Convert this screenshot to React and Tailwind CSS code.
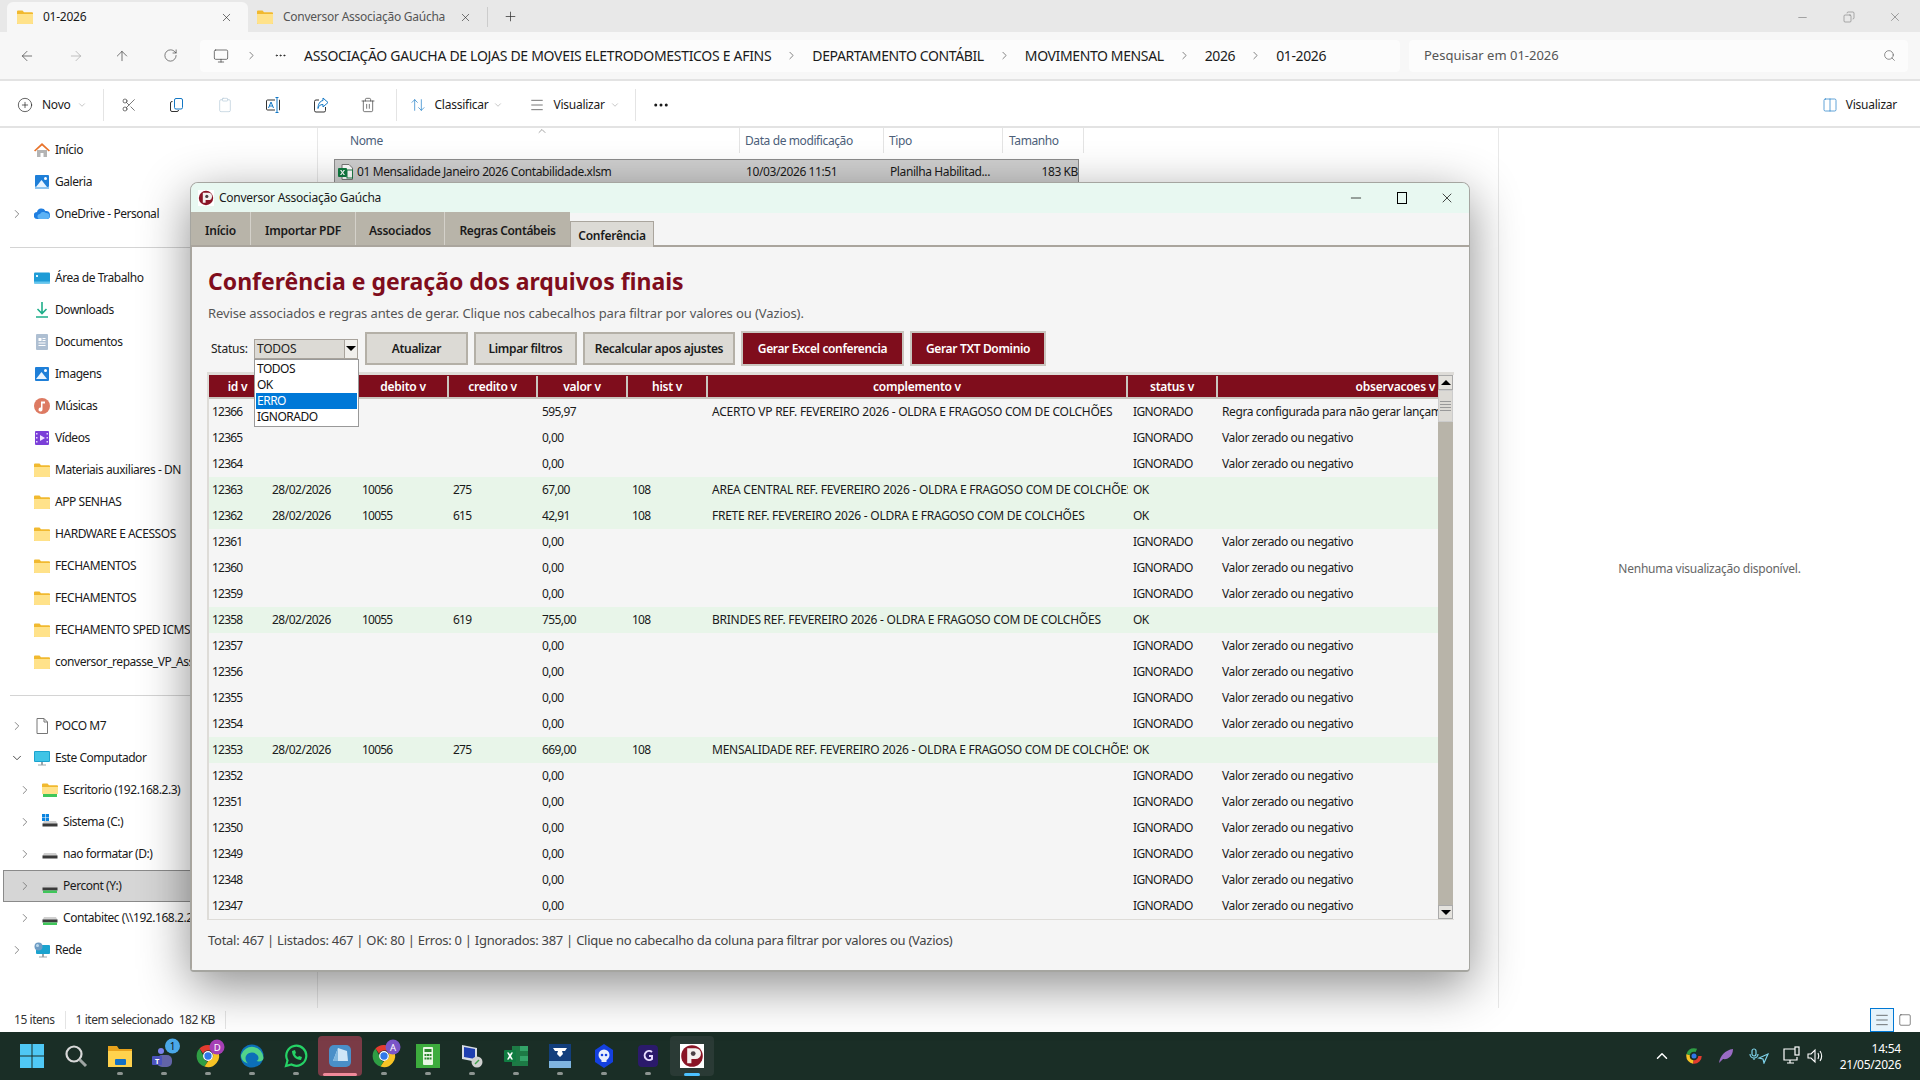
import {
  ArrowLeft, ArrowRight, ArrowUp, RotateCw, Monitor, ChevronRight, ChevronDown, ChevronUp, Scissors, Clipboard,
  Trash2, ArrowUpDown, Menu, Search, X, Minus, Square, Plus, CirclePlus, Columns2, Ellipsis, Copy as Restore,
} from "lucide-react";

const COMP = " REF. FEVEREIRO 2026 - OLDRA E FRAGOSO COM DE COLCHÕES";
const ZERO = "Valor zerado ou negativo";
const ign = (id) => ({ id, val: "0,00", status: "IGNORADO", obs: ZERO });
const ok = (id, deb, cred, val, name) => ({
  id, date: "28/02/2026", deb, cred, val, hist: "108", comp: name + COMP, status: "OK", green: true,
});

const rows = [
  { id: 12366, val: "595,97", comp: "ACERTO VP" + COMP, status: "IGNORADO", obs: "Regra configurada para não gerar lançamento" },
  ign(12365), ign(12364),
  ok(12363, "10056", "275", "67,00", "AREA CENTRAL"),
  ok(12362, "10055", "615", "42,91", "FRETE"),
  ign(12361), ign(12360), ign(12359),
  ok(12358, "10055", "619", "755,00", "BRINDES"),
  ign(12357), ign(12356), ign(12355), ign(12354),
  ok(12353, "10056", "275", "669,00", "MENSALIDADE"),
  ign(12352), ign(12351), ign(12350), ign(12349), ign(12348), ign(12347),
];

const GRID = "grid grid-cols-[59px_91px_90px_89px_90px_80px_420px_90px_220px]";

function Folder({ className = "w-4 h-4" }) {
  return (
    <svg viewBox="0 0 16 16" className={className}>
      <path d="M0 2.5A1 1 0 0 1 1 1.5h4.5L7 3.2h8a1 1 0 0 1 1 1V14a1 1 0 0 1-1 1H1a1 1 0 0 1-1-1z" fill="#f1b92f" />
      <path d="M0 5h16v9a1 1 0 0 1-1 1H1a1 1 0 0 1-1-1z" fill="#ffe28a" />
    </svg>
  );
}

function HomeIcon() {
  return (
    <svg viewBox="0 0 16 16" className="w-4 h-4">
      <path d="M3 8v7h3.5v-4h3v4H13V8z" fill="#b4b4b4" />
      <path d="M0 8.5 8 1l8 7.500-1.200 1L8 3.500 1.200 9.500z" fill="#e8742c" />
    </svg>
  );
}

function PictureIcon({ stack }) {
  return (
    <svg viewBox="0 0 16 16" className="w-4 h-4">
      {stack && <rect x="1" y="13" width="14" height="2" fill="#8cc4f0" />}
      <rect x="1" y="1" width="14" height={stack ? 12 : 14} rx="1" fill="#1e7fd8" />
      <circle cx="11.500" cy="4.500" r="1.500" fill="#fff" />
      <path d="M2 13 7.500 6l5.500 7z" fill="#e8f4ff" />
    </svg>
  );
}

function OneDriveIcon() {
  return (
    <svg viewBox="0 0 16 16" className="w-4 h-4">
      <path d="M3.500 13A3.500 3.500 0 0 1 3 6a4.500 4.500 0 0 1 8.400-1A3.700 3.700 0 0 1 15.900 9 3 3 0 0 1 13 13z" fill="#1f7ee0" />
      <path d="M6 13a2.500 2.500 0 0 1 0-5 4 4 0 0 1 6-1 3 3 0 0 1 1 6z" fill="#5cb2f5" />
    </svg>
  );
}

function DesktopIcon() {
  return (
    <svg viewBox="0 0 16 16" className="w-4 h-4">
      <rect x="0" y="2.500" width="16" height="11" rx="1" fill="#1d9bd6" />
      <rect x="0" y="11.500" width="16" height="2" fill="#63c6ee" />
      <rect x="2" y="5" width="2" height="2" fill="#d8f3ff" />
    </svg>
  );
}

function DownloadIcon() {
  return (
    <svg viewBox="0 0 16 16" className="w-4 h-4" fill="none" stroke="#1fae8a" strokeWidth="1.600">
      <path d="M8 0v11M3.500 7 8 11.500 12.500 7M2 15h12" />
    </svg>
  );
}

function DocIcon() {
  return (
    <svg viewBox="0 0 16 16" className="w-4 h-4">
      <rect x="2" y="0" width="12" height="16" rx="1" fill="#aebfd2" />
      <path d="M4.500 4h3v3h-3zM8.500 4h3v1h-3zM8.500 6h3v1h-3zM4.500 8.500h7v1h-7zM4.500 11h7v1h-7z" fill="#fff" />
    </svg>
  );
}

function MusicIcon() {
  return (
    <svg viewBox="0 0 16 16" className="w-4 h-4">
      <circle cx="8" cy="8" r="8" fill="#dd7a62" />
      <path d="M7 3.500h4v2H8.500v6a2 2 0 1 1-1.500-1.900z" fill="#fff" />
    </svg>
  );
}

function VideoIcon() {
  return (
    <svg viewBox="0 0 16 16" className="w-4 h-4">
      <rect x="1" y="1" width="14" height="14" rx="1" fill="#7b3fd8" />
      <path d="M6 5l5 3-5 3z" fill="#f0e6ff" />
      <path d="M2 3h1.500v1.500H2zM2 7h1.500v1.500H2zM2 11h1.500v1.500H2zM12.500 3H14v1.500h-1.500zM12.500 7H14v1.500h-1.500zM12.500 11H14v1.500h-1.500z" fill="#e5d8ff" />
    </svg>
  );
}

function PageIcon() {
  return (
    <svg viewBox="0 0 16 16" className="w-4 h-4" fill="#fff" stroke="#777">
      <path d="M3 .5h7l3.500 3.500v11.500h-10.500z" />
      <path d="M10 .5V4h3.500" fill="none" />
    </svg>
  );
}

function PcIcon() {
  return (
    <svg viewBox="0 0 16 16" className="w-4 h-4">
      <rect x="0" y="1" width="16" height="11" rx="1" fill="#1ba3cf" />
      <rect x="1" y="2" width="14" height="9" fill="#3fc4e6" />
      <path d="M7 12h2v2.500h3v1H4v-1h3z" fill="#9aa5ab" />
    </svg>
  );
}

function DriveIcon({ green, win, folder }) {
  if (folder) {
    return (
      <svg viewBox="0 0 16 16" className="w-4 h-4">
        <path d="M0 2.500A1 1 0 0 1 1 1.500h4.500L7 3.200h8a1 1 0 0 1 1 1V11H0z" fill="#f1b92f" />
        <path d="M0 5h16v7H0z" fill="#ffe28a" />
        <rect x="1" y="12" width="14" height="3" fill="#3fc65a" />
      </svg>
    );
  }
  return (
    <svg viewBox="0 0 16 16" className="w-4 h-4">
      {win && <path d="M0 0h3.200v3.200H0zM3.800 0H7v3.200H3.800zM0 3.800h3.200V7H0zM3.800 3.800H7V7H3.800z" fill="#0a84e0" />}
      <path d="M2 7h12l1.500 3h-15z" fill="#d0d0d0" />
      <rect x="0.500" y="9.500" width="15" height="3" fill="#3a3a3a" />
      {green && <rect x="1" y="12.500" width="14" height="2.500" fill="#3fc65a" />}
    </svg>
  );
}

function NetIcon() {
  return (
    <svg viewBox="0 0 16 16" className="w-4 h-4">
      <rect x="2" y="3" width="14" height="9" rx="1" fill="#1ba3cf" />
      <path d="M8 12h2v2.500h3v1H5v-1h3z" fill="#9aa5ab" />
      <circle cx="4.500" cy="4.500" r="4" fill="#6d9cc4" />
      <circle cx="3.500" cy="3.500" r="1.500" fill="#bcd8ec" />
    </svg>
  );
}

function ExcelFile() {
  return (
    <svg viewBox="0 0 16 16" className="w-4 h-4">
      <path d="M4 .5h7l3.500 3.500v11.500H4z" fill="#fff" stroke="#777" />
      <rect x="9" y="6" width="5.500" height="8" fill="none" stroke="#1d7a45" />
      <rect x="0" y="4" width="9" height="9" rx="1" fill="#107c41" />
      <path d="M2 6h1.500l1 1.700L5.500 6H7L5.200 8.500 7 11H5.500l-1-1.700-1 1.700H2l1.800-2.500z" fill="#fff" />
    </svg>
  );
}

function CopyIcon() {
  return (
    <svg viewBox="0 0 16 16" className="w-4 h-4" fill="none" strokeWidth="1">
      <path d="M3.500 4.500H3A1.500 1.500 0 0 0 1.500 6v7A1.500 1.500 0 0 0 3 14.500h5A1.500 1.500 0 0 0 9.500 13" stroke="#333" />
      <rect x="5.500" y="1.500" width="8" height="10.500" rx="1.500" stroke="#1377c4" />
    </svg>
  );
}

function RenameIcon() {
  return (
    <svg viewBox="0 0 16 16" className="w-4 h-4" fill="none" strokeWidth="1">
      <path d="M10 3H2.500A1 1 0 0 0 1.500 4v8a1 1 0 0 0 1 1H10M14 3h.5v10H14" stroke="#333" />
      <path d="M12 .5v15M10.500.5h3M10.500 15.500h3" stroke="#1377c4" />
      <path d="M3.500 11 6 5l2.500 6M4.400 9h3.200" stroke="#1377c4" />
    </svg>
  );
}

function ShareIcon() {
  return (
    <svg viewBox="0 0 16 16" className="w-4 h-4" fill="none" strokeWidth="1">
      <path d="M6 3H3a1.500 1.500 0 0 0-1.500 1.500v9A1.500 1.500 0 0 0 3 15h8a1.500 1.500 0 0 0 1.500-1.500V10" stroke="#333" />
      <path d="M10 1l5 4.500L10 10V7.500C7 7.500 5.500 9 5 11.500 5 7 7 4 10 3.500z" stroke="#1377c4" />
    </svg>
  );
}

function AppLogo({ className = "w-4 h-4" }) {
  return (
    <svg viewBox="0 0 20 20" className={className}>
      <rect width="20" height="20" fill="#fff" />
      <circle cx="10" cy="10" r="9" fill="#8a1526" />
      <path d="M6 3.500h7a4.500 4.500 0 0 1 0 9H9.500V16H6z" fill="#f4f0ee" />
      <circle cx="11" cy="8" r="2" fill="#4b4045" />
    </svg>
  );
}

function NavRow({ icon, label, depth = 0, chevron, open, selected }) {
  return (
    <div
      className={`h-8 flex items-center text-[12px] tracking-[-0.45px] whitespace-nowrap overflow-hidden ${depth ? "pl-[18px]" : "pl-[10px]"} ${
        selected ? "ml-[3px] bg-[#d6d6d6] border border-[#8a8a8a] !pl-[14px]" : ""
      }`}
    >
      <span className="w-[14px] h-4 flex items-center justify-center shrink-0">
        {chevron &&
          (open ? (
            <ChevronDown className="w-[14px] h-[14px] text-[#333]" strokeWidth={1.5} />
          ) : (
            <ChevronRight className="w-[14px] h-[14px] text-[#777]" strokeWidth={1.5} />
          ))}
      </span>
      <span className="ml-[10px] shrink-0">{icon}</span>
      <span className="ml-[5px] text-[#1a1a1a]">{label}</span>
    </div>
  );
}

function Sidebar() {
  const pinned = [
    [<DesktopIcon />, "Área de Trabalho"],
    [<DownloadIcon />, "Downloads"],
    [<DocIcon />, "Documentos"],
    [<PictureIcon />, "Imagens"],
    [<MusicIcon />, "Músicas"],
    [<VideoIcon />, "Vídeos"],
    [<Folder />, "Materiais auxiliares - DN"],
    [<Folder />, "APP SENHAS"],
    [<Folder />, "HARDWARE E ACESSOS"],
    [<Folder />, "FECHAMENTOS"],
    [<Folder />, "FECHAMENTOS"],
    [<Folder />, "FECHAMENTO SPED ICMS"],
    [<Folder />, "conversor_repasse_VP_Associacao"],
  ];
  return (
    <div className="w-[318px] shrink-0 pt-[6px] border-r border-[#e8e8e8]">
      <NavRow icon={<HomeIcon />} label="Início" />
      <NavRow icon={<PictureIcon stack />} label="Galeria" />
      <NavRow icon={<OneDriveIcon />} label="OneDrive - Personal" chevron />
      <div className="ml-[10px] mt-[17px] mb-[14px] h-px bg-[#d4d4d4]" />
      {pinned.map(([icon, label], i) => (
        <NavRow key={i} icon={icon} label={label} />
      ))}
      <div className="ml-[10px] mt-[17px] mb-[14px] h-px bg-[#d4d4d4]" />
      <NavRow icon={<PageIcon />} label="POCO M7" chevron />
      <NavRow icon={<PcIcon />} label="Este Computador" chevron open />
      <NavRow icon={<DriveIcon folder />} label="Escritorio (192.168.2.3)" depth={1} chevron />
      <NavRow icon={<DriveIcon win />} label="Sistema (C:)" depth={1} chevron />
      <NavRow icon={<DriveIcon />} label="nao formatar (D:)" depth={1} chevron />
      <NavRow icon={<DriveIcon green />} label="Percont (Y:)" depth={1} chevron selected />
      <NavRow icon={<DriveIcon green />} label="Contabitec (\\192.168.2.2)" depth={1} chevron />
      <NavRow icon={<NetIcon />} label="Rede" chevron />
    </div>
  );
}

function FileList() {
  return (
    <div className="w-[1181px] shrink-0 border-r border-[#e8e8e8] relative tracking-[-0.4px]">
      <ChevronUp className="absolute left-[218px] -top-[3px] w-[12px] h-[12px] text-[#666]" strokeWidth={1.2} />
      <div className="h-[25px] ml-4 grid grid-cols-[406px_144px_119px_81px] text-[12px] text-[#4c607a]">
        <div className="pl-4 pt-[4px] border-r border-[#e4e4e4]">Nome</div>
        <div className="pl-[5px] pt-[4px] border-r border-[#e4e4e4]">Data de modificação</div>
        <div className="pl-[5px] pt-[4px] border-r border-[#e4e4e4]">Tipo</div>
        <div className="pl-[6px] pt-[4px] border-r border-[#e4e4e4]">Tamanho</div>
      </div>
      <div className="mt-[6px] ml-4 w-[745px] h-[25px] grid grid-cols-[406px_144px_119px_76px] items-center bg-[#cfcfcf] border border-[#8c8c8c] text-[12px] text-[#1a1a1a] whitespace-nowrap">
        <div className="flex items-center gap-[3px] pl-[3px]">
          <ExcelFile />
          01 Mensalidade Janeiro 2026 Contabilidade.xlsm
        </div>
        <div className="pl-[5px]">10/03/2026 11:51</div>
        <div className="pl-[5px]">Planilha Habilitad...</div>
        <div className="text-right pr-[2px]">183 KB</div>
      </div>
    </div>
  );
}

function TkButton({ children, w, red }) {
  return (
    <button
      type="button"
      className={`${w} font-semibold text-[12px] tracking-[-0.35px] ${
        red
          ? "h-[35px] bg-[#7f0d1c] text-white border-2 border-[#c9c6bf]"
          : "h-[33px] bg-[#dcdad5] text-[#1a1a1a] border-2 border-[#b4b0a7]"
      }`}
    >
      {children}
    </button>
  );
}

function Dialog() {
  const headers = ["id v", "data v", "debito v", "credito v", "valor v", "hist v", "complemento v", "status v"];
  return (
    <div className="absolute left-[190px] top-[182px] w-[1280px] h-[790px] rounded-t-[8px] rounded-b-[4px] overflow-hidden bg-[#f5f5f5] border border-[#a5a5a0] border-b-2 shadow-[0_14px_50px_rgba(0,0,0,0.45)] flex flex-col">
      <div className="h-[30px] shrink-0 bg-[#e8f8f1] flex items-center pl-[7px] text-[12px] text-[#1a1a1a]">
        <AppLogo />
        <span className="ml-[5px]">Conversor Associação Gaúcha</span>
        <span className="ml-auto flex items-center">
          <Minus className="w-4 h-4 mr-[33px]" strokeWidth={1.2} />
          <span className="w-[10px] h-[12px] mr-[32px] border-[1.5px] border-black" />
          <X className="w-4 h-4 mr-[14px]" strokeWidth={1.2} />
        </span>
      </div>

      <div className="h-[34px] shrink-0 flex items-end border-b-2 border-[#aaa59d] text-[12px] font-semibold text-[#1a1a1a]">
        <div className="w-[60px] h-[33px] pt-[5px] bg-[#b8b4a9] flex items-center justify-center border-r border-[#d4d1ca]">Início</div>
        <div className="w-[105px] h-[33px] pt-[5px] bg-[#b8b4a9] flex items-center justify-center border-r border-[#d4d1ca]">Importar PDF</div>
        <div className="w-[89px] h-[33px] pt-[5px] bg-[#b8b4a9] flex items-center justify-center border-r border-[#d4d1ca]">Associados</div>
        <div className="w-[125px] h-[33px] pt-[5px] bg-[#b8b4a9] flex items-center justify-center tracking-[-0.35px]">Regras Contábeis</div>
        <div className="w-[84px] h-[26px] pt-[2px] -mb-[2px] bg-[#dcdad5] border border-b-0 border-[#aaa59d] flex items-center justify-center">Conferência</div>
      </div>

      <div className="flex-1 pl-[16px] border-l border-[#aaa59d] relative">
        <h1 className="mt-[17px] h-[34px] flex items-center text-[23px] tracking-normal font-bold text-[#7f0d1c] leading-none">
          Conferência e geração dos arquivos finais
        </h1>
        <p className="mt-[6px] text-[13px] tracking-[-0.1px] leading-[18px] text-[#555]">
          Revise associados e regras antes de gerar. Clique nos cabecalhos para filtrar por valores ou (Vazios).
        </p>

        <div className="mt-[9px] h-[35px] flex items-center text-[12px] text-[#222]">
          <span className="ml-[3px] w-[43px]">Status:</span>
          <div className="w-[104px] h-[20px] bg-[#dcdad5] border border-[#a8a39c] flex items-center justify-between pl-[2px]">
            <span>TODOS</span>
            <span className="w-[13px] h-full bg-[#f0efec] border-l border-[#a8a39c] flex items-center justify-center">
              <span className="w-0 h-0 border-l-[5px] border-r-[5px] border-t-[5px] border-l-transparent border-r-transparent border-t-black" />
            </span>
          </div>
          <div className="ml-[7px] flex items-center gap-[6px]">
            <TkButton w="w-[103px]">Atualizar</TkButton>
            <TkButton w="w-[103px]">Limpar filtros</TkButton>
            <TkButton w="w-[152px]">Recalcular apos ajustes</TkButton>
            <TkButton w="w-[163px]" red>Gerar Excel conferencia</TkButton>
            <TkButton w="w-[136px]" red>Gerar TXT Dominio</TkButton>
          </div>
        </div>

        <div className="absolute left-[62px] top-[112px] w-[105px] h-[68px] z-10 bg-white border border-[#999] pt-px text-[12px] tracking-[-0.5px] text-[#111] leading-[16px]">
          <div className="pl-[2px] h-4">TODOS</div>
          <div className="pl-[2px] h-4">OK</div>
          <div className="mx-px pl-px h-4 bg-[#0078d7] text-white">ERRO</div>
          <div className="pl-[2px] h-4">IGNORADO</div>
        </div>

        <div className="mt-[6px] -ml-px w-[1247px] h-[548px] border-t-[3px] border-l-2 border-b border-[#dedcd8] flex overflow-hidden">
          <div className="w-[1229px] shrink-0">
            <div className={`${GRID} h-[24px] pt-px bg-[#7f0d1c] border-b-2 border-[#c9c6bf] text-white text-[12px] font-semibold`}>
              {headers.map((h) => (
                <div key={h} className="flex items-center justify-center border-r-2 border-[#c9c6bf]">{h}</div>
              ))}
              <div className="flex items-center justify-end pr-[3px]">observacoes v</div>
            </div>
            {rows.map((r) => (
              <div key={r.id} className={`${GRID} h-[26px] items-center text-[12px] text-[#1a1a1a] whitespace-nowrap ${r.green ? "bg-[#e8f5e9]" : ""}`}>
                <div className="pl-[3px] tracking-[-0.8px]">{r.id}</div>
                <div className="pl-1 tracking-[-0.5px]">{r.date}</div>
                <div className="pl-[3px] tracking-[-0.8px]">{r.deb}</div>
                <div className="pl-1 tracking-[-0.8px]">{r.cred}</div>
                <div className="pl-1 tracking-[-0.6px]">{r.val}</div>
                <div className="pl-1 tracking-[-0.8px]">{r.hist}</div>
                <div className="pl-1 pr-[3px] overflow-hidden">{r.comp}</div>
                <div className="pl-[5px] tracking-[-0.6px]">{r.status}</div>
                <div className="pl-1 tracking-[-0.4px] overflow-hidden">{r.obs}</div>
              </div>
            ))}
          </div>
          <div className="w-[15px] shrink-0 bg-[#b8b4a9] flex flex-col">
            <div className="h-[15px] bg-[#e4e2dd] border border-[#aaa] flex items-center justify-center">
              <span className="w-0 h-0 border-l-[5px] border-r-[5px] border-b-[5px] border-l-transparent border-r-transparent border-b-black" />
            </div>
            <div className="h-[32px] bg-[#dcdad5] border border-[#ccc] flex flex-col items-center justify-center gap-[2px]">
              <span className="w-[11px] h-px bg-[#999]" />
              <span className="w-[11px] h-px bg-[#999]" />
              <span className="w-[11px] h-px bg-[#999]" />
              <span className="w-[11px] h-px bg-[#999]" />
            </div>
            <div className="flex-1" />
            <div className="h-[14px] bg-[#e4e2dd] border border-[#aaa] flex items-center justify-center">
              <span className="w-0 h-0 border-l-[5px] border-r-[5px] border-t-[5px] border-l-transparent border-r-transparent border-t-black" />
            </div>
          </div>
        </div>

        <p className="mt-[11px] text-[13px] tracking-[-0.27px] leading-[18px] text-[#444]">
          Total: 467 | Listados: 467 | OK: 80 | Erros: 0 | Ignorados: 387 | Clique no cabecalho da coluna para filtrar por valores ou (Vazios)
        </p>
      </div>
    </div>
  );
}

function Chrome({ badge }) {
  return (
    <svg viewBox="0 0 24 24" className="w-6 h-6 overflow-visible">
      <path d="M12 1a11 11 0 0 1 9.500 5.500H12a5.500 5.500 0 0 0-5 3L3.500 4.500A11 11 0 0 1 12 1z" fill="#e33b2e" />
      <path d="M3.500 4.500 7.500 12a5 5 0 0 0 4 5.400L8.500 22.500A11 11 0 0 1 3.500 4.500z" fill="#2f9e44" />
      <path d="M21.500 6.500A11 11 0 0 1 8.500 22.500l4-6a5 5 0 0 0 4-7.500z" fill="#f7c325" />
      <circle cx="12" cy="12" r="4.300" fill="#2f78e8" stroke="#fff" strokeWidth="1.300" />
      <circle cx="21" cy="3" r="7.500" fill={badge === "D" ? "#a53fb5" : "#7a55c7"} />
      <text x="21" y="6.500" fontSize="9.500" fontFamily="Noto Sans" fill="#fff" textAnchor="middle">{badge}</text>
    </svg>
  );
}

const taskIcons = [
  <svg viewBox="0 0 24 24" className="w-6 h-6"><path d="M0 0h11.500v11.500H0zM12.500 0H24v11.500H12.500zM0 12.500h11.500V24H0zM12.500 12.500H24V24H12.500z" fill="#4fc8f5" /></svg>,
  <svg viewBox="0 0 24 24" className="w-6 h-6" fill="none"><circle cx="10" cy="10" r="7.500" stroke="#d8d8d8" strokeWidth="2.200" /><path d="m15.500 15.500 6.500 6.500" stroke="#9fa5a3" strokeWidth="3" /></svg>,
  <svg viewBox="0 0 24 24" className="w-6 h-6"><path d="M0 2h9l2 3h13v18H0z" fill="#e8a21c" /><path d="M0 7h24v16H0z" fill="#ffd24d" /><rect x="7" y="15" width="11" height="6" rx="1" fill="#1470c4" /></svg>,
  <svg viewBox="0 0 24 24" className="w-6 h-6 overflow-visible"><circle cx="9" cy="7" r="3" fill="#7b83eb" /><rect x="5" y="11" width="15" height="12" rx="5" fill="#6264a7" /><rect x="0" y="12" width="10" height="9" rx="1" fill="#4b53bc" /><text x="5" y="19.500" fontSize="7.500" fontWeight="700" fontFamily="Noto Sans" fill="#fff" textAnchor="middle">T</text><circle cx="20.500" cy="2" r="7.500" fill="#4aa8e8" /><text x="20.500" y="5.500" fontSize="10" fontFamily="Noto Sans" fill="#111" textAnchor="middle">1</text></svg>,
  <Chrome badge="D" />,
  <svg viewBox="0 0 24 24" className="w-6 h-6"><circle cx="12" cy="12" r="11.500" fill="#0c6fb8" /><path d="M1 11a11.500 11.500 0 0 1 22.500 3c0 3-4 4-7 3 2-1 2.500-3 1.500-5-2-4-9-5-12 0-1 2-.5 5 2 7.500C3 18 1 15 1 11z" fill="#52d38a" /></svg>,
  <svg viewBox="0 0 24 24" className="w-6 h-6" fill="none"><path d="M2 22l1.500-5.500A10 10 0 1 1 7.500 20.500z" stroke="#25d366" strokeWidth="2.200" /><path d="M8 7c0 5 4 9 9 9l1-3-3-1-1 1c-1.500-.5-2.500-1.500-3-3l1-1-1-3z" fill="#25d366" /></svg>,
  <svg viewBox="0 0 24 24" className="w-6 h-6"><rect x="1" y="1" width="22" height="22" rx="5" fill="#4a8fc8" /><path d="M5 17 10 4l9 3 1 10z" fill="#cfe6f7" /><path d="M10 4v13H5z" fill="#7fb6de" /></svg>,
  <Chrome badge="A" />,
  <svg viewBox="0 0 24 24" className="w-6 h-6"><rect width="24" height="24" fill="#3dac3d" /><rect x="7" y="3" width="10" height="18" rx="1" fill="#e9f7e4" /><path d="M8.500 5h7v3h-7zM8.500 10h2v2h-2zM11 10h2v2h-2zM13.500 10h2v2h-2zM8.500 13.500h2v2h-2zM11 13.500h2v2h-2zM13.500 13.500h2v2h-2z" fill="#2d862d" /></svg>,
  <svg viewBox="0 0 24 24" className="w-6 h-6"><path d="M2 1l15 3v14L2 15z" fill="#d8dde4" /><path d="M4 3l11 2v10L4 13z" fill="#1f3fb0" /><circle cx="17" cy="18" r="5.500" fill="#d0d0d0" /><path d="M15 20l4-4" stroke="#3fa04a" strokeWidth="1.500" /></svg>,
  <svg viewBox="0 0 24 24" className="w-6 h-6"><path d="M8 2h16v20H8z" fill="#1d7a45" /><path d="M16 2h8v5h-8zM16 12h8v5h-8z" fill="#33a368" /><rect x="0" y="6" width="12" height="12" rx="1" fill="#107c41" /><path d="M3 8.500h1.800L6 10.600l1.200-2.100H9l-2 3.500 2 3.500H7.200L6 13.400l-1.200 2.100H3l2-3.500z" fill="#fff" /></svg>,
  <svg viewBox="0 0 24 24" className="w-6 h-6"><rect x="1" width="22" height="17" fill="#123e7c" /><rect x="1" y="17" width="22" height="7" fill="#7fb5e0" /><path d="M5 4h14l-2 3H14l1 3-3 3-3-3 1-3H7z" fill="#fff" /></svg>,
  <svg viewBox="0 0 24 24" className="w-6 h-6"><path d="M12 0l9 6v12l-9 6-9-6V6z" fill="#1440e0" /><circle cx="12" cy="11" r="5.500" fill="#e8eefc" /><circle cx="10" cy="11" r="1.300" fill="#1440e0" /><circle cx="14" cy="11" r="1.300" fill="#1440e0" /><rect x="9.500" y="15" width="5" height="3" fill="#e8eefc" /></svg>,
  <svg viewBox="0 0 24 24" className="w-6 h-6"><rect x="2" y="1" width="20" height="22" rx="4" fill="#2b1a6b" /><path d="M16 8a4.500 4.500 0 1 0 0 7v-3h-3" fill="none" stroke="#e8dcff" strokeWidth="2" /></svg>,
  <AppLogo className="w-6 h-6" />,
];

function Taskbar() {
  return (
    <div className="h-12 shrink-0 bg-[#1a2e26] flex items-center relative text-white">
      <div className="ml-[10px] flex">
        {taskIcons.map((icon, i) => {
          const running = i >= 2 && i !== 7 && i !== 15;
          return (
            <div
              key={i}
              className={`w-[44px] h-[40px] rounded-[4px] flex items-center justify-center relative ${
                i === 7 ? "bg-[#7a3b46]" : i === 15 ? "bg-[#2a3a35]" : ""
              }`}
            >
              {icon}
              {running && <span className="absolute bottom-[1px] left-[19px] w-[6px] h-[3px] rounded-full bg-[#8c9490]" />}
              {i === 7 && <span className="absolute bottom-0 left-[5px] w-[34px] h-[3px] rounded-full bg-[#f08a9a]" />}
              {i === 15 && <span className="absolute bottom-0 left-[14px] w-[16px] h-[3px] rounded-full bg-[#4cc2ff]" />}
            </div>
          );
        })}
      </div>
      <div className="ml-auto flex items-center pr-[19px]">
        <ChevronUp className="w-[18px] h-[18px]" strokeWidth={2} />
        <svg viewBox="0 0 16 16" className="ml-[15px] w-4 h-4">
          <circle cx="8" cy="8" r="6" fill="none" stroke="#e33b2e" strokeWidth="3.500" strokeDasharray="10 28" />
          <circle cx="8" cy="8" r="6" fill="none" stroke="#f7c325" strokeWidth="3.500" strokeDasharray="10 28" strokeDashoffset="-10" />
          <circle cx="8" cy="8" r="6" fill="none" stroke="#2f9e44" strokeWidth="3.500" strokeDasharray="10 28" strokeDashoffset="-20" />
          <circle cx="8" cy="8" r="2.500" fill="#2f78e8" />
        </svg>
        <svg viewBox="0 0 16 16" className="ml-[16px] w-4 h-4"><path d="M1 15C2 8 7 2 15 1c0 7-5 11-10 10z" fill="#9a6bc4" /></svg>
        <svg viewBox="0 0 20 16" className="ml-[15px] w-5 h-4" fill="none" stroke="#7fd3ea" strokeWidth="1.200">
          <rect x="3" y="1" width="4" height="7" rx="2" />
          <path d="M1 6a4 4 0 0 0 8 0M5 10v2" />
          <path d="M19 6 10 10l4 1 1 4z" />
        </svg>
        <svg viewBox="0 0 20 20" className="ml-[13px] w-5 h-5" fill="none" stroke="#fff" strokeWidth="1.200">
          <path d="M13 3H2v11h13v-3M8 14v3M5 17h7" />
          <rect x="13" y="1" width="4" height="8" />
        </svg>
        <svg viewBox="0 0 20 20" className="ml-[3px] w-5 h-5" fill="none" stroke="#fff" strokeWidth="1.100">
          <path d="M3 8v4h3l4 4V4L6 8zM13 7c1 2 1 4 0 6M15 5c2 3 2 7 0 10" />
        </svg>
        <div className="ml-[14px] w-[62px] pt-px text-right text-[12px] leading-[16px]">
          <div>14:54</div>
          <div>21/05/2026</div>
        </div>
      </div>
    </div>
  );
}

export default function App() {
  const crumbs = [
    "ASSOCIAÇÃO GAUCHA DE LOJAS DE MOVEIS ELETRODOMESTICOS E AFINS",
    "DEPARTAMENTO CONTÁBIL",
    "MOVIMENTO MENSAL",
    "2026",
    "01-2026",
  ];
  return (
    <div className="w-[1920px] h-[1080px] relative overflow-hidden bg-white flex flex-col font-['Noto_Sans',sans-serif] tracking-[-0.25px]">
      <div className="h-8 shrink-0 bg-[#e8e8e8] flex items-end text-[12px] relative">
        <div className="ml-[7px] w-[241px] h-[30px] bg-[#f7f7f7] rounded-t-[6px] flex items-center pl-[10px] text-[#1a1a1a]">
          <Folder />
          <span className="ml-[10px]">01-2026</span>
          <X className="ml-auto mr-[15px] w-[13px] h-[13px]" strokeWidth={1.1} />
        </div>
        <div className="w-[239px] h-[30px] flex items-center pl-[9px] text-[#555]">
          <Folder />
          <span className="ml-[10px]">Conversor Associação Gaúcha</span>
          <X className="ml-auto mr-[15px] w-[13px] h-[13px] text-[#222]" strokeWidth={1.1} />
        </div>
        <span className="w-px h-[20px] mb-[5px] bg-[#ccc]" />
        <Plus className="ml-[15px] mb-2 w-[15px] h-[15px] text-[#333]" strokeWidth={1.2} />
        <div className="ml-auto h-[30px] flex items-center text-[#666]">
          <Minus className="w-[13px] h-[13px] mr-[34px]" strokeWidth={1} />
          <Restore className="w-[12px] h-[12px] mr-[33px] -scale-x-100" strokeWidth={1} />
          <X className="w-[14px] h-[14px] mr-[18px]" strokeWidth={1} />
        </div>
      </div>

      <div className="h-[49px] shrink-0 bg-[#f7f7f7] border-b-2 border-[#e3e3e3] flex items-center text-[#444]">
        <ArrowLeft className="ml-[19px] w-4 h-4" strokeWidth={1.1} />
        <ArrowRight className="ml-[33px] w-4 h-4 text-[#aaa]" strokeWidth={1.1} />
        <ArrowUp className="ml-[30px] w-4 h-4" strokeWidth={1.1} />
        <RotateCw className="ml-[33px] w-[15px] h-[15px]" strokeWidth={1.1} />
        <div className="ml-[22px] w-[1200px] h-8 bg-[#fcfcfc] rounded-[4px] flex items-center text-[14px] tracking-[-0.38px] text-[#1a1a1a] whitespace-nowrap">
          <Monitor className="ml-[13px] w-4 h-4 text-[#444]" strokeWidth={1.1} />
          <ChevronRight className="ml-[16px] w-[13px] h-[13px] text-[#444]" strokeWidth={1.2} />
          <Ellipsis className="ml-[16px] w-[13px] h-[13px]" strokeWidth={1.5} />
          {crumbs.map((c, i) => (
            <span key={c} className="flex items-center">
              {i > 0 && <ChevronRight className="mx-[14px] w-[13px] h-[13px] text-[#444]" strokeWidth={1.2} />}
              <span className={i === 0 ? "ml-[17px] tracking-[-0.3px]" : ""}>{c}</span>
            </span>
          ))}
        </div>
        <div className="ml-[9px] w-[499px] h-8 bg-[#fcfcfc] rounded-[4px] flex items-center pl-[15px] pr-[12px] text-[13px] tracking-normal text-[#555]">
          Pesquisar em 01-2026
          <Search className="ml-auto w-[13px] h-[13px]" strokeWidth={1.2} />
        </div>
      </div>

      <div className="h-[47px] pt-[2px] shrink-0 border-b-2 border-[#e3e3e3] flex items-center text-[12px] text-[#1a1a1a]">
        <CirclePlus className="ml-[17px] w-4 h-4" strokeWidth={1} />
        <span className="ml-[9px]">Novo</span>
        <ChevronDown className="ml-[6px] w-[10px] h-[10px] text-[#777]" strokeWidth={1} />
        <span className="ml-[16px] w-px h-8 bg-[#e4e4e4]" />
        <Scissors className="ml-[17px] w-4 h-4 text-[#333]" strokeWidth={1} />
        <span className="ml-[32px]"><CopyIcon /></span>
        <Clipboard className="ml-[32px] w-4 h-4 text-[#b4c8d8]" strokeWidth={1} />
        <span className="ml-[32px]"><RenameIcon /></span>
        <span className="ml-[32px]"><ShareIcon /></span>
        <Trash2 className="ml-[31px] w-4 h-4 text-[#333]" strokeWidth={1} />
        <span className="ml-[20px] w-px h-8 bg-[#e4e4e4]" />
        <ArrowUpDown className="ml-[13px] w-4 h-4 text-[#1377c4]" strokeWidth={1} />
        <span className="ml-[9px]">Classificar</span>
        <ChevronDown className="ml-[5px] w-[10px] h-[10px] text-[#777]" strokeWidth={1} />
        <Menu className="ml-[26px] w-4 h-4 text-[#333]" strokeWidth={1} />
        <span className="ml-2">Visualizar</span>
        <ChevronDown className="ml-[5px] w-[10px] h-[10px] text-[#777]" strokeWidth={1} />
        <span className="ml-[15px] w-px h-8 bg-[#e4e4e4]" />
        <Ellipsis className="ml-[16px] w-[18px] h-[18px]" strokeWidth={2} />
        <Columns2 className="ml-auto w-4 h-4 text-[#1377c4]" strokeWidth={1} />
        <span className="ml-2 mr-[23px]">Visualizar</span>
      </div>

      <div className="flex-1 flex min-h-0">
        <Sidebar />
        <FileList />
        <div className="flex-1 flex items-center justify-center text-[12px] text-[#666] pt-[2px]">
          Nenhuma visualização disponível.
        </div>
      </div>

      <div className="h-6 shrink-0 flex items-center text-[12px] tracking-[-0.45px] text-[#333]">
        <span className="ml-[14px]">15 itens</span>
        <span className="ml-[10px] w-px h-[18px] bg-[#e4e4e4]" />
        <span className="ml-[10px]">1 item selecionado&nbsp;&nbsp;182 KB</span>
        <span className="ml-[10px] w-px h-[18px] bg-[#e4e4e4]" />
        <span className="ml-auto w-[24px] h-6 bg-[#e5f3fb] border border-[#0078d4] flex items-center justify-center">
          <Menu className="w-4 h-4 text-[#333]" strokeWidth={1} />
        </span>
        <Square className="ml-[4px] mr-[8px] w-[14px] h-[14px] text-[#333]" strokeWidth={1} />
      </div>

      <Taskbar />
      <Dialog />
    </div>
  );
}
